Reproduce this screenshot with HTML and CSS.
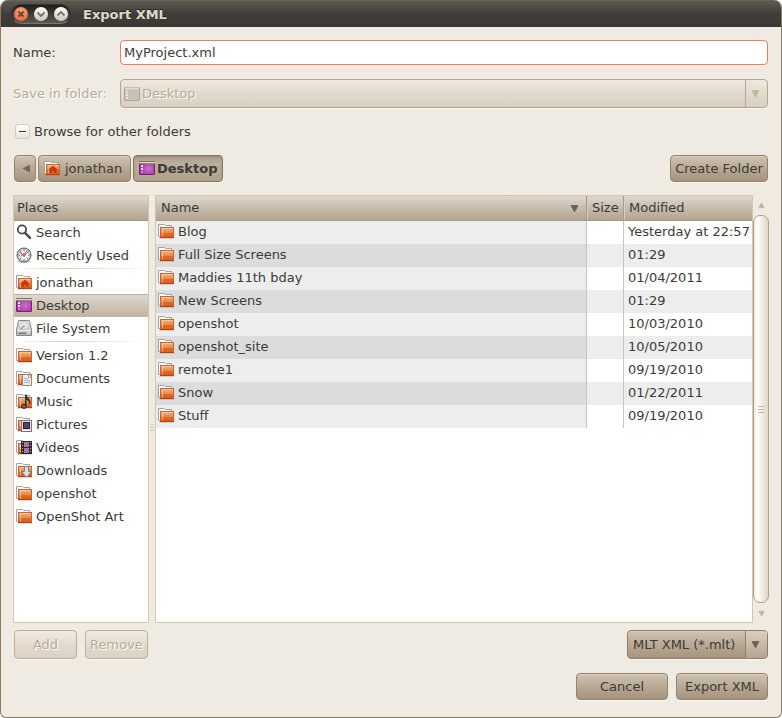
FILE: index.html
```html
<!DOCTYPE html>
<html lang="en">
<head>
<meta charset="utf-8">
<title>Export XML</title>
<link rel="stylesheet" href="styles.css">
</head>
<body>
<svg class="defs" width="0" height="0" aria-hidden="true">
  <defs>
    <linearGradient id="orange" x1="0" y1="0" x2="0" y2="1">
      <stop offset="0" stop-color="#f0b487"/><stop offset=".5" stop-color="#e58c4a"/><stop offset=".55" stop-color="#dd6f26"/><stop offset="1" stop-color="#dc5a1c"/>
    </linearGradient>
    <radialGradient id="purple" cx=".6" cy=".55" r=".7">
      <stop offset="0" stop-color="#cf6fcc"/><stop offset="1" stop-color="#9a2b99"/>
    </radialGradient>
    <linearGradient id="metal" x1="0" y1="0" x2="0" y2="1">
      <stop offset="0" stop-color="#f4f4f4"/><stop offset="1" stop-color="#b8b8b8"/>
    </linearGradient>
  </defs>
  <symbol id="folder" viewBox="0 0 16 16">
    <path d="M.5 13.500V1.500H6.500L7.500 2.500H13.500V5H3V13.500Z" fill="#fff"/>
    <path d="M2.500 13.500H.5V1.500H6.500L7.500 2.500H13.500V4" fill="none" stroke="#a3a3a3"/>
    <path d="M1 15.500H16" stroke="#777" stroke-opacity=".25"/>
    <rect x="2.500" y="4.500" width="13" height="10" fill="url(#orange)" stroke="#d4622f"/>
    <path d="M2 14.500H16" stroke="#c23c12"/>
    <path d="M4.500 13.500V5.500H14.500" fill="none" stroke="#fbe0c6" stroke-width=".8" opacity=".7"/>
  </symbol>
  <symbol id="home" viewBox="0 0 16 16">
    <use href="#folder"/>
    <path d="M9 5.500 14 10H12.500V13H10V11H8V13H5.500V10H4Z" fill="#c63a10"/>
  </symbol>
  <symbol id="desktop" viewBox="0 0 16 16">
    <rect x=".5" y="1.500" width="15" height="13" rx=".5" fill="url(#purple)" stroke="#77217a"/>
    <path d="M0 1.500H16" stroke="#77755f"/><path d="M0 2.500H16" stroke="#d9d8bd"/><path d="M0 3.500H16" stroke="#8c8b75"/>
    <path d="M2 5h2v2H2zM2 8h2v2H2z" fill="#f0d9ef"/><path d="M2 11h2v2H2z" fill="#c982c7"/>
  </symbol>
  <symbol id="desktop-off" viewBox="0 0 16 16">
    <rect x=".5" y="1.500" width="15" height="13" rx=".5" fill="#c9c0b8" stroke="#aea59b"/>
    <path d="M1 2.500H15" stroke="#dfdad2" stroke-width="2"/>
    <path d="M2 5h2v2H2zM2 8h2v2H2zM2 11h2v2H2z" fill="#ebe6e0"/>
  </symbol>
  <symbol id="search" viewBox="0 0 16 16">
    <circle cx="6" cy="5.500" r="4.200" fill="#fff" stroke="#484848" stroke-width="1.800"/>
    <path d="M9 8.800 14 13.800" stroke="#484848" stroke-width="2.400" stroke-linecap="round"/>
  </symbol>
  <symbol id="recent" viewBox="0 0 16 16">
    <ellipse cx="8" cy="14.500" rx="7" ry="1.400" fill="#999" opacity=".5"/>
    <circle cx="8" cy="8" r="7" fill="#d8d8d5" stroke="#50524e"/>
    <circle cx="8" cy="8" r="5.400" fill="#f7f7f5" stroke="#bbb" stroke-width=".7"/>
    <path d="M8 2.500V4M8 12v1.500M2.500 8H4M12 8h1.500M4.200 4.200l1 1M11.800 11.800l-1-1M4.200 11.800l1-1" stroke="#555" stroke-width=".9"/>
    <path d="M3.500 5 8 8.500 12.500 4.500" fill="none" stroke="#484848" stroke-width=".9"/>
    <path d="M4.500 9.500 11 4" stroke="#d33" stroke-width=".8"/>
    <circle cx="8" cy="8.200" r="1.200" fill="#e58a8a" stroke="#555" stroke-width=".5"/>
  </symbol>
  <symbol id="disk" viewBox="0 0 16 16">
    <path d="M2.500 .5H13.500L15.500 10V15.500H.5V10Z" fill="url(#metal)" stroke="#858585"/>
    <ellipse cx="8" cy="5.500" rx="5" ry="4" fill="#e4e4e4" stroke="#b5b5b5" stroke-width=".8"/>
    <path d="M8.500 5.500 4.500 9.500" stroke="#999" stroke-width="1.200"/>
    <path d="M1 10.500H15" stroke="#f3f3f3"/>
    <path d="M2.500 13.500H10" stroke="#777"/><path d="M2.500 12.500H10" stroke="#a5a5a5"/><path d="M12 13H14" stroke="#eee"/>
  </symbol>
  <symbol id="documents" viewBox="0 0 16 16">
    <use href="#folder"/>
    <path d="M6.500 4.500H12.500L15.500 7.500V15.500H6.500Z" fill="#ececec" stroke="#8b8b8b"/>
    <path d="M12.500 4.500V7.500H15.500" fill="#fff" stroke="#8b8b8b" stroke-width=".8"/>
    <path d="M8 8.500h4M8 10.500h6M8 12.500h6" stroke="#b5b5b5"/>
  </symbol>
  <symbol id="music" viewBox="0 0 16 16">
    <use href="#folder"/>
    <path d="M9 1.500H10.500C11 5 15 5 14.500 10.500L13 11C13.500 8.500 12 7.500 10.500 7V13H9Z" fill="#383838"/>
    <ellipse cx="8" cy="13.500" rx="2.500" ry="1.900" fill="#666" stroke="#282828"/>
  </symbol>
  <symbol id="pictures" viewBox="0 0 16 16">
    <use href="#folder"/>
    <rect x="5.500" y="4.500" width="10" height="11" fill="#e9e9e9" stroke="#777"/>
    <rect x="7.500" y="6.500" width="6" height="6" fill="#5c4468" stroke="#241c2c"/>
  </symbol>
  <symbol id="videos" viewBox="0 0 16 16">
    <use href="#folder"/>
    <rect x="5" y="2" width="11" height="13" fill="#30252f"/>
    <path d="M8 3h5v5H8zM8 9h5v5H8z" fill="#a278ac"/>
    <path d="M6.500 3V15M14.500 3V15" stroke="#e8b06e" stroke-dasharray="1 2"/>
  </symbol>
  <symbol id="downloads" viewBox="0 0 16 16">
    <use href="#folder"/>
    <path d="M8.500 4.500H12.500V9.500H15.500L10.500 15.500 5.500 9.500H8.500Z" fill="#dedede" stroke="#7c7c7c"/>
  </symbol>
  <symbol id="down" viewBox="0 0 9 9"><path d="M1 1.500H8L4.500 8Z" fill="currentColor" stroke="currentColor" stroke-width=".8"/></symbol>
  <symbol id="up" viewBox="0 0 9 9"><path d="M1 7.500H8L4.500 1Z" fill="currentColor" stroke="currentColor" stroke-width=".8"/></symbol>
</svg>

<main class="window">
  <header class="titlebar">
    <div class="controls">
      <button class="control close" aria-label="Close"><svg viewBox="0 0 14 14"><path d="M4.500 4.500 9.500 9.500M9.500 4.500 4.500 9.500"/></svg></button>
      <button class="control" aria-label="Minimize"><svg viewBox="0 0 14 14"><path d="M3.500 5.500 7 9 10.500 5.500"/></svg></button>
      <button class="control" aria-label="Maximize"><svg viewBox="0 0 14 14"><path d="M3.500 8.500 7 5 10.500 8.500"/></svg></button>
    </div>
    <h1>Export XML</h1>
  </header>

  <form class="content">
    <div class="field name-field">
      <label for="name">Name:</label>
      <input id="name" type="text" value="MyProject.xml">
    </div>
    <div class="field folder-field">
      <label for="folder-select">Save in folder:</label>
      <div class="combo disabled">
        <svg class="icon"><use href="#desktop-off"/></svg>
        <select id="folder-select" disabled><option>Desktop</option></select>
        <span class="combo-arrow"><svg><use href="#down"/></svg></span>
      </div>
    </div>

    <button type="button" class="expander" aria-expanded="true"><span class="expander-box"></span>Browse for other folders</button>

    <div class="pathbar">
      <button type="button" class="button back" aria-label="Back"><svg viewBox="0 0 9 9"><path d="M8 .5V8.500L.5 4.500Z"/></svg></button>
      <button type="button" class="button crumb"><svg class="icon"><use href="#home"/></svg>jonathan</button>
      <button type="button" class="button crumb current"><svg class="icon"><use href="#desktop"/></svg>Desktop</button>
      <button type="button" class="button create">Create Folder</button>
    </div>

    <div class="browser">
      <nav class="panel places" aria-label="Places">
        <h2>Places</h2>
        <ul>
          <li><button type="button"><svg class="icon"><use href="#search"/></svg>Search</button></li>
          <li><button type="button"><svg class="icon"><use href="#recent"/></svg>Recently Used</button></li>
          <li class="separator"></li>
          <li><button type="button"><svg class="icon"><use href="#home"/></svg>jonathan</button></li>
          <li><button type="button" class="selected"><svg class="icon"><use href="#desktop"/></svg>Desktop</button></li>
          <li><button type="button"><svg class="icon"><use href="#disk"/></svg>File System</button></li>
          <li class="separator"></li>
          <li><button type="button"><svg class="icon"><use href="#folder"/></svg>Version 1.2</button></li>
          <li><button type="button"><svg class="icon"><use href="#documents"/></svg>Documents</button></li>
          <li><button type="button"><svg class="icon"><use href="#music"/></svg>Music</button></li>
          <li><button type="button"><svg class="icon"><use href="#pictures"/></svg>Pictures</button></li>
          <li><button type="button"><svg class="icon"><use href="#videos"/></svg>Videos</button></li>
          <li><button type="button"><svg class="icon"><use href="#downloads"/></svg>Downloads</button></li>
          <li><button type="button"><svg class="icon"><use href="#folder"/></svg>openshot</button></li>
          <li><button type="button"><svg class="icon"><use href="#folder"/></svg>OpenShot Art</button></li>
        </ul>
      </nav>
      <div class="splitter"><span class="grip"></span></div>
      <div class="panel files">
        <table>
          <colgroup><col><col class="col-size"><col class="col-modified"></colgroup>
          <thead>
            <tr><th><span class="sorted">Name<svg><use href="#down"/></svg></span></th><th>Size</th><th>Modified</th></tr>
          </thead>
          <tbody>
            <tr><td><svg class="icon"><use href="#folder"/></svg>Blog</td><td></td><td>Yesterday at 22:57</td></tr>
            <tr><td><svg class="icon"><use href="#folder"/></svg>Full Size Screens</td><td></td><td>01:29</td></tr>
            <tr><td><svg class="icon"><use href="#folder"/></svg>Maddies 11th bday</td><td></td><td>01/04/2011</td></tr>
            <tr><td><svg class="icon"><use href="#folder"/></svg>New Screens</td><td></td><td>01:29</td></tr>
            <tr><td><svg class="icon"><use href="#folder"/></svg>openshot</td><td></td><td>10/03/2010</td></tr>
            <tr><td><svg class="icon"><use href="#folder"/></svg>openshot_site</td><td></td><td>10/05/2010</td></tr>
            <tr><td><svg class="icon"><use href="#folder"/></svg>remote1</td><td></td><td>09/19/2010</td></tr>
            <tr><td><svg class="icon"><use href="#folder"/></svg>Snow</td><td></td><td>01/22/2011</td></tr>
            <tr><td><svg class="icon"><use href="#folder"/></svg>Stuff</td><td></td><td>09/19/2010</td></tr>
          </tbody>
        </table>
      </div>
      <div class="scrollbar">
        <button type="button" aria-label="Scroll up"><svg><use href="#up"/></svg></button>
        <div class="thumb"><span class="grip"></span></div>
        <button type="button" aria-label="Scroll down"><svg><use href="#down"/></svg></button>
      </div>
    </div>

    <div class="tools">
      <button type="button" class="button small" disabled>Add</button>
      <button type="button" class="button small" disabled>Remove</button>
      <div class="combo filter">
        <select aria-label="File type"><option>MLT XML (*.mlt)</option></select>
        <span class="combo-arrow"><svg><use href="#down"/></svg></span>
      </div>
    </div>

    <div class="actions">
      <button type="button" class="button">Cancel</button>
      <button type="button" class="button">Export XML</button>
    </div>
  </form>
</main>
</body>
</html>
```

FILE: styles.css
```css
* { box-sizing: border-box; }

body {
  margin: 0;
  background: #fff;
  color: #3c3b37;
  font: 13px/17px "DejaVu Sans", sans-serif;
}

button, input, select { font: inherit; color: inherit; margin: 0; }
button { padding: 0; border: 0; background: none; white-space: nowrap; }
svg { display: block; flex: none; }
.defs { position: absolute; }
.icon { width: 16px; height: 16px; }

.window {
  display: flex;
  flex-direction: column;
  min-height: 100vh;
  border: 1px solid #8b7a62;
  border-top: 0;
  border-radius: 8px 8px 6px 6px;
  background: #efebe3;
  overflow: hidden;
}

/* Title bar */
.titlebar {
  display: flex;
  align-items: center;
  gap: 12px;
  height: 27px;
  padding: 0 10px;
  border-top: 1px solid #6b6350;
  background: linear-gradient(#5c5a51, #3e3d39 50%, #3a3935);
}
.titlebar h1 {
  margin: 0;
  color: #dfd8c8;
  font-size: 13px;
  text-shadow: 0 -1px #222;
}
.controls {
  display: flex;
  gap: 6px;
  padding: 2px;
  border: 1px solid #35342f;
  border-bottom-color: #77756d;
  border-radius: 10px;
  background: linear-gradient(#1f1f1c, #5a5852);
}
.control {
  width: 14px;
  height: 14px;
  border-radius: 50%;
  background: linear-gradient(#fff, #c9c5bb);
}
.control path { fill: none; stroke: #77736a; stroke-width: 1.8; }
.close { background: radial-gradient(circle at 50% 30%, #f9a583, #e8582a); }
.close path { stroke: #6b4030; }

/* Form fields */
.content {
  display: flex;
  flex: 1;
  flex-direction: column;
  padding: 13px 12px 17px;
}
.field {
  display: grid;
  grid-template-columns: 107px 1fr;
  align-items: center;
  padding-right: 1px;
}
.folder-field { margin-top: 14px; }
.folder-field label { color: #b8ab95; text-shadow: 1px 1px #fff; }
.field input {
  width: 100%;
  height: 25px;
  padding: 0 3px;
  border: 1px solid #f37b60;
  border-radius: 4px;
  background: #fff;
  outline: 0;
}

/* Drop-downs */
.combo {
  display: flex;
  align-items: center;
  position: relative;
  height: 29px;
  border: 1px solid #8f7f6a;
  border-radius: 4px;
  background: linear-gradient(#cfc3b2, #b8a995 50%, #a5947d);
  box-shadow: 0 1px #f8f5ef, inset 0 1px #d8cebf;
}
.combo select {
  flex: 1;
  min-width: 0;
  height: 27px;
  padding: 0 24px 0 5px;
  border: 0;
  background: none;
  appearance: none;
  outline: 0;
}
.combo-arrow {
  display: grid;
  place-items: center;
  position: absolute;
  top: 0;
  right: 0;
  bottom: 0;
  width: 22px;
  padding-right: 2px;
  border-left: 1px solid #8f7f6a;
  border-radius: 0 3px 3px 0;
  background: linear-gradient(#dacfc1, #b4a590);
  color: #66625a;
  pointer-events: none;
}
.combo-arrow svg, .sorted svg { width: 9px; height: 9px; }
.combo.disabled {
  padding-left: 3px;
  border-color: #b3a691;
  background: linear-gradient(#eee9e0, #e2dacd 50%, #d9cfc1);
  box-shadow: 0 1px #f8f5ef;
}
.disabled select {
  padding-left: 2px;
  color: #b8ab95;
  opacity: 1;
  text-shadow: 1px 1px #fff;
}
.disabled .combo-arrow { border-color: #b3a691; background: none; color: #c1b49d; }
.filter { width: 141px; margin-left: auto; }

/* Expander */
.expander {
  display: flex;
  align-items: center;
  align-self: flex-start;
  gap: 4px;
  margin-top: 15px;
  padding-left: 2px;
}
.expander-box {
  display: grid;
  place-items: center;
  width: 15px;
  height: 15px;
  border: 1px solid #d5ccbb;
  border-radius: 3px;
  background: linear-gradient(#fff, #e9e4d6);
}
.expander-box::before { content: ""; width: 7px; height: 1px; background: #3c3b37; }

/* Buttons */
.button {
  height: 27px;
  padding: 0 4px;
  border: 1px solid #94846e;
  border-radius: 4px;
  background: linear-gradient(#cfc3b2, #b8a995 50%, #a5947d);
  box-shadow: 0 1px #f8f5ef, inset 0 1px #d8cebf;
}
.button:disabled {
  border-color: #bdb09b;
  background: linear-gradient(#f0ece4, #e3dbcf 50%, #dbd1c3);
  box-shadow: 0 1px #f8f5ef;
  color: #b8ab95;
  text-shadow: 1px 1px #fff;
}
.pathbar {
  display: flex;
  gap: 2px;
  margin-top: 15px;
  padding: 0 1px;
}
.back { width: 22px; padding-left: 7px; }
.back svg { width: 9px; height: 9px; fill: #6d675c; }
.crumb {
  display: flex;
  align-items: center;
  gap: 5px;
  width: 93px;
  padding: 0 4px 1px 5px;
}
.current {
  gap: 2px;
  width: 90px;
  border-color: #887862;
  background: linear-gradient(#ab9d88, #bbae9b 30%, #b0a18b);
  box-shadow: 0 1px #f8f5ef, inset 0 1px 2px #988872;
  font-weight: bold;
}
.create { width: 98px; margin-left: auto; }

/* File browser */
.browser { display: flex; flex: 1; margin-top: 13px; }
.panel { border: 1px solid #d5c8b3; background: #fff; }
.places { width: 136px; }
.places h2, th {
  height: 25px;
  border-bottom: 1px solid #a89983;
  background: linear-gradient(#dfd8cd, #c8bcac 50%, #b3a48f);
  font-size: 13px;
  font-weight: normal;
  line-height: 24px;
  text-align: left;
}
.places h2 { margin: 0; padding-left: 3px; }
.places ul { margin: 0; padding: 0; list-style: none; }
.places li button {
  display: flex;
  align-items: center;
  gap: 4px;
  width: 100%;
  height: 23px;
  padding: 0 0 1px 2px;
}
.places .selected {
  background: linear-gradient(#bfb29f 1px, #dfd8ce 1px, #c0b29e);
}
.places .separator {
  height: 4px;
  background: linear-gradient(90deg, #fff, #d9ccb9 35%, #fff) 0 1px / 100% 1px no-repeat;
}
.splitter { display: grid; place-items: center; width: 6px; padding-top: 36px; }
.grip {
  width: 6px;
  height: 7px;
  background: repeating-linear-gradient(#c4b69f 0 1px, transparent 1px 3px);
}
.splitter .grip { width: 4px; opacity: .6; }

.files { flex: 1; min-width: 0; }
.files table { width: 100%; border-spacing: 0; table-layout: fixed; }
.col-size { width: 37px; }
.col-modified { width: 129px; }
th { padding: 0 5px; }
th + th { border-left: 1px solid #a89983; box-shadow: inset 1px 0 #d9cfc1; padding: 0 5px; }
.sorted { display: flex; align-items: center; justify-content: space-between; padding-right: 2px; }
.sorted svg { color: #66625a; }
td { height: 23px; padding: 0 4px 1px; line-height: 22px; white-space: nowrap; }
td + td { border-left: 1px solid #c5c5c5; }
td:first-child { padding-left: 2px; background: #ededed; }
tbody tr:nth-child(even) { background: #ededed; }
tbody tr:nth-child(even) td:first-child { background: #dcdcdc; }
td .icon { display: inline-block; margin-right: 4px; vertical-align: -3px; }

.scrollbar {
  display: flex;
  flex-direction: column;
  width: 16px;
}
.scrollbar button { display: grid; place-items: center; height: 20px; color: #c1b49d; }
.scrollbar svg { width: 7px; height: 7px; }
.thumb {
  display: grid;
  place-items: center;
  flex: 1;
  border: 1px solid #b3a183;
  border-radius: 7px;
  background: linear-gradient(90deg, #ede8dd, #fff 25%, #f7f4ec 45%, #dfd7c8);
}

/* Bottom rows */
.tools { display: flex; gap: 8px; margin-top: 7px; padding: 0 1px; }
.small { width: 63px; height: 29px; }
.actions { display: flex; justify-content: flex-end; gap: 8px; margin-top: 14px; padding-right: 1px; }
.actions .button { width: 92px; }
```
